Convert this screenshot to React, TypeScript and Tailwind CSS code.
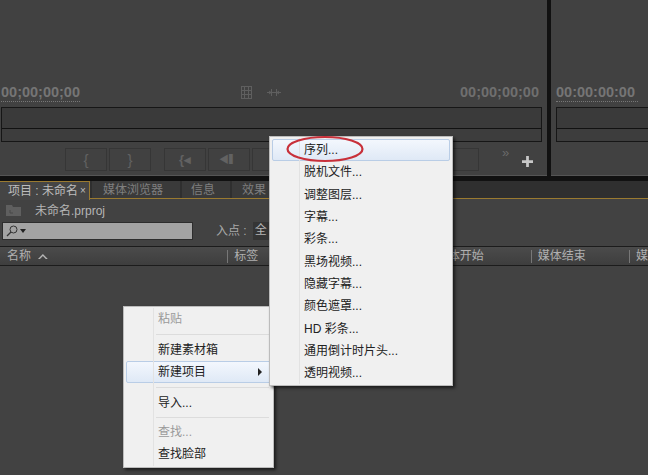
import React from "react";

const cjk = "font-['Liberation_Sans','Noto_Sans_CJK_SC',sans-serif]";

function Tracks({ className }: { className: string }) {
  return (
    <div className={`${className} h-[35px] border border-[#161616] bg-[#3b3b3b] flex flex-col`}>
      <div className="h-[21px] border-b border-[#111] bg-[#3a3a3a]" />
      <div className="flex-1 bg-[#3d3d3d]" />
    </div>
  );
}

function TransportButton({ w, children }: { w: string; children?: React.ReactNode }) {
  return (
    <div className={`${w} h-[23px] shrink-0 border border-[#363636] bg-[#414141] flex items-center justify-center`}>
      {children}
    </div>
  );
}

function Item({ label, disabled, active, arrow, h = "h-[22px]" }: { label: string; disabled?: boolean; active?: boolean; arrow?: boolean; h?: string }) {
  return (
    <div
      className={`${h} flex items-center justify-between pr-[8px] rounded-[2px] border ${
        active ? "border-[#b9cde6] bg-gradient-to-b from-[#f3f7fd] to-[#dfe9f6]" : "border-transparent"
      }`}
    >
      <span className={`pl-[31px] text-[12px] leading-none ${disabled ? "text-[#9a9a9a]" : "text-[#222]"}`}>{label}</span>
      {arrow && <span className="w-0 h-0 border-y-[4px] border-y-transparent border-l-[4px] border-l-[#222]" />}
    </div>
  );
}

function Sep({ my = "my-[4px]" }: { my?: string }) {
  return <div className={`h-px ml-[30px] mr-[2px] ${my} bg-[#dcdcdc]`} />;
}

export default function App() {
  return (
    <div className={`relative w-[648px] h-[475px] overflow-hidden bg-[#111] ${cjk}`}>
      {/* Monitors */}
      <div className="flex h-[176px] gap-[4px] bg-[#111]">
        <div className="w-[547px] shrink-0 bg-[#414141] border-b border-[#555] flex flex-col">
          <div className="h-[84px]" />
          <div className="flex justify-between pl-[1px] pr-[8px] h-[23px] font-bold text-[14.5px] leading-[17px] text-[#757575]">
            <span className="border-b border-dotted border-[#777] h-[18px]">00;00;00;00</span>
            <div className="flex items-center gap-[14px] mb-[6px] ml-[-20px]">
              <svg width="13" height="13" viewBox="0 0 13 13" fill="none" stroke="#5f5f5f">
                <rect x="1.5" y="0.5" width="10" height="12" />
                <path d="M1.5 4.5h10M1.5 8.5h10M4.5 .5v12M8.5 .5v12" />
              </svg>
              <svg width="14" height="9" viewBox="0 0 14 9" fill="none" stroke="#5f5f5f">
                <path d="M0 4.5h14M4.5 1v7M9.5 1v7M2 3l2 1.5L2 6M12 3l-2 1.5L12 6" />
              </svg>
            </div>
            <span className="text-[#6f6f6f]">00;00;00;00</span>
          </div>
          <Tracks className="ml-[1px] w-[541px]" />
          <div className="flex items-center h-[23px] mt-[6px] pl-[65px] gap-[2px]">
            <TransportButton w="w-[42px]"><span className="text-[#626262] text-[15px] leading-none">{"{"}</span></TransportButton>
            <TransportButton w="w-[42px]"><span className="text-[#626262] text-[15px] leading-none">{"}"}</span></TransportButton>
            <div className="w-[9px] shrink-0" />
            <TransportButton w="w-[42px]"><span className="text-[#626262] text-[13px] leading-none font-bold">{"{◂"}</span></TransportButton>
            <TransportButton w="w-[42px]"><span className="text-[#626262] text-[10px] leading-none">◀▍</span></TransportButton>
            <TransportButton w="w-[42px]" />
            <div className="w-[143px] shrink-0" />
            <TransportButton w="w-[38px]" />
            <div className="relative w-[60px] h-full">
              <span className="absolute left-[21px] -top-[2px] text-[#6a6a6a] text-[13px] leading-none">»</span>
              <svg className="absolute left-[41px] top-[8px]" width="11" height="11" viewBox="0 0 12 12">
                <path d="M4.5 0h3v4.5H12v3H7.5V12h-3V7.5H0v-3h4.5z" fill="#c8c8c8" />
              </svg>
            </div>
          </div>
        </div>
        <div className="flex-1 bg-[#414141] border-b border-[#555] flex flex-col">
          <div className="h-[84px]" />
          <div className="h-[23px] pl-[5px] font-bold text-[14.5px] leading-[17px] text-[#757575]">
            <span className="border-b border-dotted border-[#777] inline-block h-[18px] w-[82px]">00:00:00:00</span>
          </div>
          <Tracks className="ml-[5px] w-[110px]" />
        </div>
      </div>

      {/* Project panel */}
      <div className="mt-[5px] h-[294px] bg-[#424242] flex flex-col">
        <div className="h-[18px] flex bg-[#2f2f2f] border-b border-[#9a7a30] text-[12px] leading-[18px] text-[#7f7f7f]">
          <div className="w-[90px] h-[19px] bg-[#454545] border-t border-r border-[#9a7a30] pl-[8px] text-[#bdbdbd] flex gap-[2px] whitespace-nowrap">
            项目 : 未命名 <span className="text-[10px]">×</span>
          </div>
          <div className="w-[88px] ml-[2px] pl-[11px] bg-[#3a3a3a]">媒体浏览器</div>
          <div className="w-[48px] ml-[2px] pl-[9px] bg-[#3a3a3a]">信息</div>
          <div className="w-[48px] ml-[2px] pl-[10px] bg-[#3a3a3a]">效果</div>
        </div>
        <div className="h-[23px] flex items-center pl-[6px] text-[12px] text-[#b5b5b5]">
          <svg width="15" height="11" viewBox="0 0 15 11" className="mr-[14px]">
            <path d="M0 0h6l1 2h8v9H0z" fill="#5f5f5f" />
            <path d="M4 5v3h3" stroke="#494949" fill="none" />
          </svg>
          未命名.prproj
        </div>
        <div className="h-[18px] flex items-center">
          <div className="ml-[2px] w-[191px] h-[18px] bg-[#a3a3a3] border border-[#2d2d2d] flex items-center pl-[3px] gap-[2px]">
            <svg width="12" height="12" viewBox="0 0 12 12" fill="none" stroke="#333">
              <circle cx="7.5" cy="4.5" r="3.5" />
              <path d="M5 7L1 11" strokeWidth="1.3" />
            </svg>
            <span className="w-0 h-0 border-x-[3px] border-x-transparent border-t-[4px] border-t-[#222]" />
          </div>
          <span className="ml-[23px] text-[12px] text-[#a8a8a8] whitespace-nowrap">入点 :</span>
          <span className="ml-[6px] pl-[2px] w-[30px] h-[18px] text-[12px] leading-[17px] bg-[#353535] text-[#b5b5b5]">全</span>
        </div>
        <div className="mt-[6px] h-[20px] border-y border-[#1c1c1c] bg-gradient-to-b from-[#4b4b4b] to-[#3e3e3e] flex items-center text-[12px] text-[#b0b0b0] whitespace-nowrap">
          <span className="ml-[7px] w-[31px]">名称</span>
          <svg width="12" height="7" viewBox="0 0 12 7">
            <path d="M1 6l5-5 5 5-2 0-3-3-3 3z" fill="#b5b5b5" />
          </svg>
          <span className="ml-[178px] w-px h-[13px] bg-[#777]" />
          <span className="ml-[6px] w-[205px]">标签</span>
          <span className="w-[48px]">媒体开始</span>
          <span className="ml-[47px] w-px h-[13px] bg-[#777]" />
          <span className="ml-[6px] w-[93px]">媒体结束</span>
          <span className="w-px h-[13px] bg-[#777]" />
          <span className="ml-[6px]">媒</span>
        </div>
        <div className="flex-1" />
      </div>

      {/* Context menu */}
      <div className="absolute left-[123px] top-[306px] w-[151px] h-[162px] bg-[#f0f0f0] border border-[#bcbcbc] shadow-[2px_2px_3px_rgba(0,0,0,0.6)] p-[2px] pt-[1px]">
        <div className="absolute left-[29px] top-[1px] bottom-[1px] w-px bg-[#e2e2e2]" />
        <Item label="粘贴" disabled />
        <Sep />
        <Item label="新建素材箱" />
        <Item label="新建项目" active arrow />
        <Sep />
        <Item label="导入..." />
        <Sep my="my-[3px]" />
        <Item label="查找..." disabled />
        <Item label="查找脸部" />
      </div>

      {/* Submenu */}
      <div className="absolute left-[269px] top-[136px] w-[184px] h-[250px] bg-[#f0f0f0] border border-[#bcbcbc] shadow-[2px_2px_3px_rgba(0,0,0,0.6)] p-[2px] pb-0">
        <div className="absolute left-[29px] top-[1px] bottom-[1px] w-px bg-[#e2e2e2]" />
        {["序列...", "脱机文件...", "调整图层...", "字幕...", "彩条...", "黑场视频...", "隐藏字幕...", "颜色遮罩...", "HD 彩条...", "通用倒计时片头...", "透明视频..."].map((l, i) => (
          <Item key={l} label={l} active={i === 0} h="h-[22.3px]" />
        ))}
      </div>

      {/* Red annotation ellipse */}
      <svg className="absolute left-[284px] top-[133px]" width="82" height="32" viewBox="0 0 82 32" fill="none">
        <ellipse cx="41" cy="16" rx="37.5" ry="12" stroke="#c8303a" strokeWidth="2.2" />
      </svg>
    </div>
  );
}
